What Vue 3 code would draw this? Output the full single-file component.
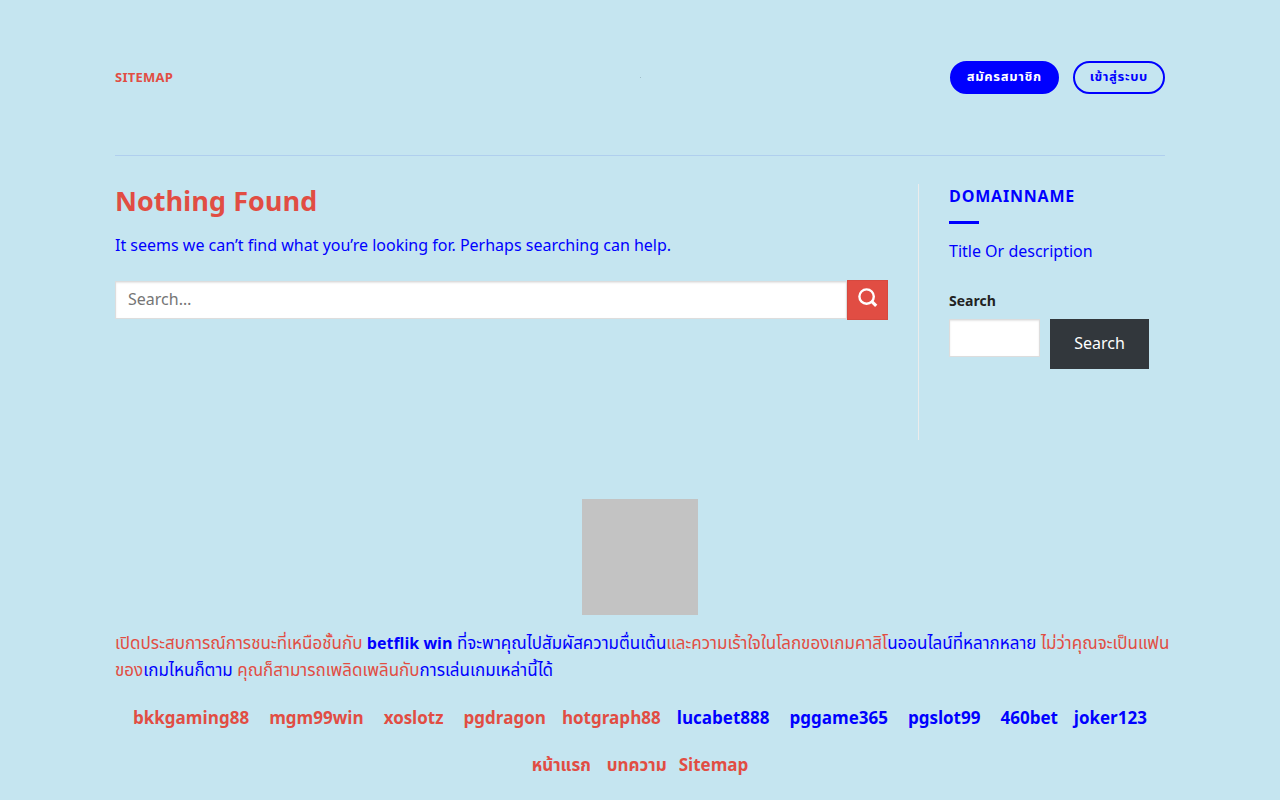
<script setup>
const partners = ['bkkgaming88', 'mgm99win', 'xoslotz', 'pgdragon', 'hotgraph88', 'lucabet888', 'pggame365', 'pgslot99', '460bet', 'joker123']
</script>

<template>
  <div class="page">
    <header class="header">
      <nav><a class="sitemap" href="#">Sitemap</a></nav>
      <a class="logo" href="#" aria-label="Home"></a>
      <div class="actions">
        <a class="btn solid" href="#">สมัครสมาชิก</a>
        <a class="btn outline" href="#">เข้าสู่ระบบ</a>
      </div>
    </header>
    <div class="content">
      <main class="main">
        <h1>Nothing Found</h1>
        <p>It seems we can’t find what you’re looking for. Perhaps searching can help.</p>
        <form class="search" @submit.prevent>
          <input type="search" placeholder="Search…" aria-label="Search for" />
          <button type="submit" aria-label="Submit">
            <svg viewBox="0 0 20 20" width="20" height="20" fill="none" stroke="#fff" stroke-width="2.4"><circle cx="8.6" cy="8.6" r="7.2" /><path d="M13.4 13.2L18.2 17.8" stroke-width="3.2" /></svg>
          </button>
        </form>
      </main>
      <aside class="side">
        <h2>Domainname</h2>
        <div class="rule"></div>
        <p>Title Or description</p>
        <form class="widget" @submit.prevent>
          <label for="side-search">Search</label>
          <div class="row">
            <input id="side-search" type="search" />
            <button type="submit">Search</button>
          </div>
        </form>
      </aside>
    </div>
    <footer class="footer">
      <div class="picture"></div>
      <p class="about"><a href="#">เปิดประสบการณ์การชนะที่เหนือชั้นกับ</a> <strong>betflik win</strong> ที่จะพาคุณไปสัมผัสความตื่นเต้น<a href="#">และความเร้าใจในโลกของเกมคาสิโ</a>นออนไลน์ที่หลากหลาย <a href="#">ไม่ว่าคุณจะเป็นแฟนของ</a>เกมไหนก็ตาม <a href="#">คุณก็สามารถเพลิดเพลินกับ</a>การเล่นเกมเหล่านี้ได้</p>
      <p class="links">
        <a v-for="(name, i) in partners" :key="name" href="#" :class="{ blue: i > 4, near: i === 3 || i === 4 || i === 8 }">{{ name }}</a>
      </p>
      <p class="links bottom"><a class="near" href="#">หน้าแรก</a><a class="close" href="#">บทความ</a><a href="#">Sitemap</a></p>
    </footer>
  </div>
</template>

<style>
body { background: #c5e5f0; }
</style>
<style scoped>
.page, .page * { box-sizing: border-box; }
.page { max-width: 1080px; margin: 0 auto; padding: 0 15px; color: #00f; font: 16px/26px "Noto Sans Thai", "Noto Sans", sans-serif; }
a { color: #e14d43; text-decoration: none; }
h1, h2, p { margin: 0; }
input, button { font: inherit; border-radius: 0; }
.header { display: grid; grid-template-columns: 1fr auto 1fr; align-items: center; height: 156px; border-bottom: 1px solid #b0cfee; }
.sitemap { display: block; font-size: 13px; font-weight: 700; text-transform: uppercase; letter-spacing: 0.02em; }
.logo { width: 1px; height: 1px; background: #9fbdc8; }
.actions { display: flex; justify-content: flex-end; gap: 14px; }
.btn { border: 2px solid #00f; border-radius: 99px; padding: 0 15px; font-size: 13px; line-height: 29px; font-weight: 700; letter-spacing: 0.05em; }
.solid { background: #00f; color: #fff; }
.outline { color: #00f; }
.content { display: flex; padding-top: 28px; }
.main { flex: 1; padding-right: 30px; }
h1 { color: #e14d43; font-size: 27px; line-height: 37px; }
.main p { margin-top: 12px; }
.search { display: flex; margin-top: 21px; align-items: center; }
input { height: 38px; min-width: 0; padding: 0 12px; border: 1px solid #ddd; background: #fff; box-shadow: inset 0 1px 2px rgba(0,0,0,.1); }
.search input { flex: 1; }
.search button { display: flex; justify-content: center; width: 41px; height: 40px; border: 1px solid #d6493f; padding: 7px 0; background: #e14d43; }
.side { width: 247px; min-height: 256px; padding-left: 30px; border-left: 1px solid #ececec; }
h2 { font-size: 16px; line-height: 26px; text-transform: uppercase; letter-spacing: 0.05em; }
.rule { width: 30px; height: 3px; margin: 11px 0 15px; background: #00f; }
.widget { margin-top: 24px; }
.widget label { display: block; color: #222; font-size: 14px; font-weight: 700; }
.row { display: flex; gap: 10px; align-items: flex-start; margin-top: 4px; padding-right: 16px; }
.row input { flex: 1; }
.row button { width: 99px; height: 50px; border: 0; background: #32373c; color: #fff; }
.footer { padding-top: 59px; }
.picture { width: 116px; height: 116px; margin: 0 auto 16px; background: #c3c3c3; }
.about { margin-right: -8px; font-size: 17px; line-height: 27px; }
.about strong { font-size: 16px; line-height: 1; }
.links { display: flex; justify-content: center; gap: 20px; margin-top: 21px; font-size: 17px; line-height: 27px; font-weight: 700; }
.links .blue { color: #00f; }
.links .near { margin-right: -4px; }
.links .close { margin-right: -8px; }
.bottom { margin-top: 20px; }
</style>
